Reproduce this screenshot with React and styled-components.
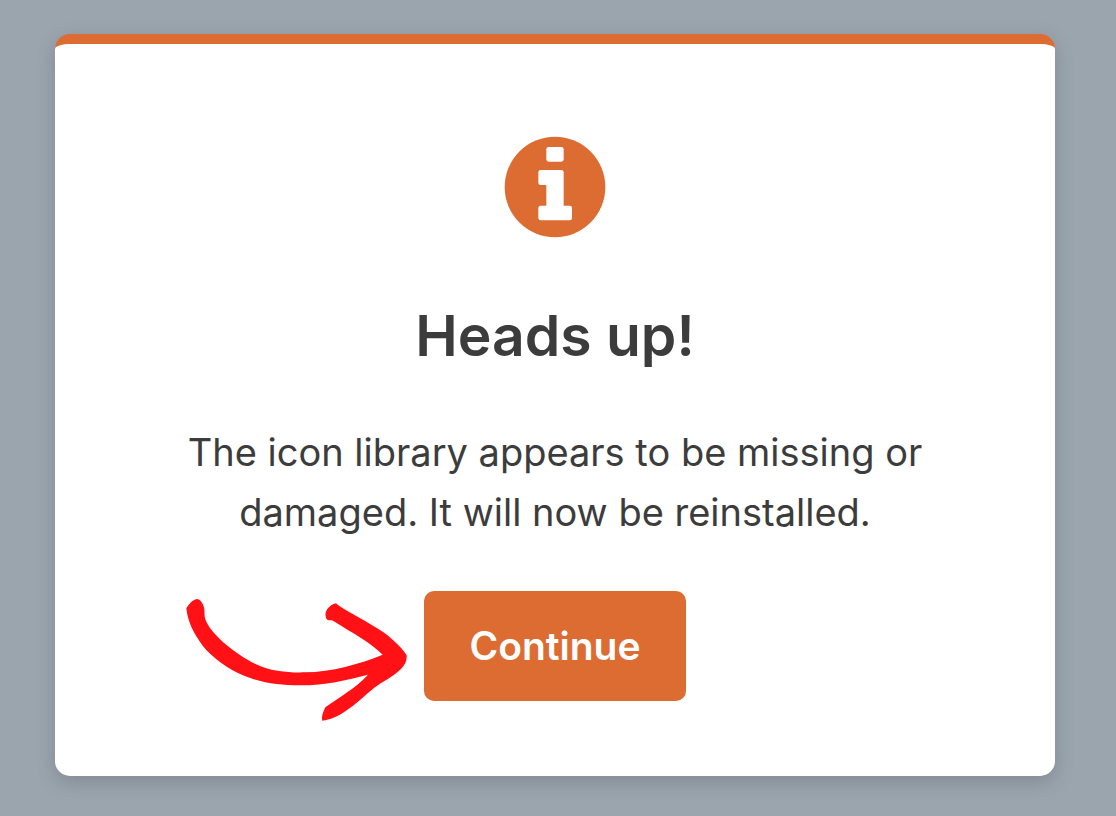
import styled, { createGlobalStyle } from "styled-components";

const GlobalStyle = createGlobalStyle`
  * {
    box-sizing: border-box;
  }
  body {
    margin: 0;
    background-color: #9ba5ae;
    color: #3c3c3c;
    font-family: Inter, "Liberation Sans", sans-serif;
  }
`;

const PageStyles = styled.main`
  min-height: 100vh;
  padding: 34px 61px 40px 55px;
`;

const DialogStyles = styled.section`
  display: flex;
  flex-direction: column;
  align-items: center;
  padding: 92px 120px 75px;
  background-color: white;
  border-top: 10px solid #dd6c32;
  border-radius: 15px;
  box-shadow: 0 6px 18px rgba(60, 60, 70, 0.25);
  text-align: center;
`;

const Title = styled.h1`
  margin: 62px 0 50px;
  font-size: 57px;
  font-weight: 600;
  line-height: 72px;
`;

const Message = styled.p`
  max-width: 760px;
  margin: 0 0 49px;
  font-size: 38px;
  line-height: 60px;
`;

const ActionStyles = styled.div`
  position: relative;
  .arrow {
    position: absolute;
    top: -6px;
    right: 100%;
    margin-right: -6px;
    pointer-events: none;
  }
`;

const Button = styled.button`
  position: relative;
  display: block;
  padding: 30px 45px;
  border: none;
  border-radius: 10px;
  background-color: #dd6c32;
  color: white;
  font-family: inherit;
  font-size: 39px;
  font-weight: 600;
  line-height: 50px;
  cursor: pointer;
`;

const InfoIcon = () => (
  <svg width="102" height="102" viewBox="43 34 306 306" aria-hidden="true">
    <circle cx="196" cy="187" r="151" fill="#dd6c32" />
    <rect x="170" y="67" width="52" height="44" rx="7" fill="white" />
    <path
      d="M153 136H215Q222 136 222 143V243H240Q247 243 247 250V280Q247 287 240 287H153Q146 287 146 280V250Q146 243 153 243H170V181H153Q146 181 146 174V143Q146 136 153 136Z"
      fill="white"
    />
  </svg>
);

const Arrow = () => (
  <svg
    className="arrow"
    width="260"
    height="150"
    viewBox="0 0 780 450"
    aria-hidden="true"
  >
    <path
      d="M49 70C56 57 69 44 80 42C91 42 101 57 103 73C104 89 103 98 109 110C130 154 199 208 255 236C305 260 355 263 405 262C485 261 569 237 638 209C604 174 548 144 489 107C481 104 475 108 470 103C460 86 471 62 498 55C506 62 514 67 526 74C577 105 638 133 671 167C687 181 700 194 710 211C711 226 706 238 695 250C673 274 638 289 611 310C583 333 558 358 527 378C503 394 481 405 457 407C453 392 461 379 466 367C509 335 558 309 594 269C529 286 466 301 391 301C330 301 279 295 224 273C174 252 129 220 98 182C71 146 53 110 49 70Z"
      fill="#ff1116"
    />
  </svg>
);

const App = () => {
  return (
    <>
      <GlobalStyle />
      <PageStyles>
        <DialogStyles
          role="alertdialog"
          aria-labelledby="dialog-title"
          aria-describedby="dialog-message"
        >
          <InfoIcon />
          <Title id="dialog-title">Heads up!</Title>
          <Message id="dialog-message">
            The icon library appears to be missing or damaged. It will now be
            reinstalled.
          </Message>
          <ActionStyles>
            <Arrow />
            <Button type="button">Continue</Button>
          </ActionStyles>
        </DialogStyles>
      </PageStyles>
    </>
  );
};

export default App;
